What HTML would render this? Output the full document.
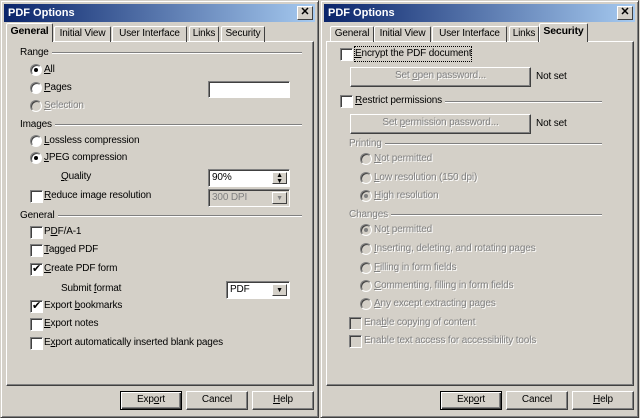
<!DOCTYPE html>
<html><head><meta charset="utf-8"><style>
*{box-sizing:border-box}
body{margin:0;width:640px;height:418px;background:#d4d0c8;font:10px "Liberation Sans",sans-serif;letter-spacing:-0.15px;color:#000;position:relative;overflow:hidden}
.dlg{position:absolute;top:0;width:319px;height:418px;background:#d4d0c8;border:1px solid;border-color:#d4d0c8 #404040 #404040 #d4d0c8;box-shadow:inset 1px 1px #fff,inset -1px -1px #808080}
.tb{position:absolute;left:3px;top:3px;right:3px;height:18px;background:linear-gradient(90deg,#0a246a,#a6caf0);color:#fff;font-weight:bold;font-size:11px;letter-spacing:0;line-height:18px;padding-left:4px}
.x{position:absolute;right:2px;top:2px;width:16px;height:14px;background:#d4d0c8;border:1px solid;border-color:#fff #404040 #404040 #fff;color:#000;font-size:11px;line-height:11px;text-align:center;font-weight:bold}
.a{position:absolute;white-space:nowrap;line-height:14px;z-index:3}
.l{background:#d4d0c8;padding-right:3px}
.g{color:#808080;text-shadow:1px 1px #fff}
.tab{position:absolute;top:26px;height:16px;border:1px solid;border-color:#fff #404040 transparent #fff;border-bottom:none;line-height:14px;text-align:center;border-radius:2px 2px 0 0}
.tab.on{top:23px;height:19px;font-weight:bold;background:#d4d0c8;z-index:2;font-size:10.5px}
.panel{position:absolute;top:41px;height:345px;border:1px solid;border-color:#fff #404040 #404040 #fff;box-shadow:inset -1px -1px #808080}
.line{position:absolute;height:2px;border-top:1px solid #808080;border-bottom:1px solid #fff}
.r{position:absolute;width:12px;height:12px;border-radius:50%;background:#fff;border:1px solid;border-color:#808080 #fff #fff #808080;box-shadow:inset 1px 1px #404040}
.r.d{background:#d4d0c8}
.r.on::after{content:"";position:absolute;left:3px;top:3px;width:4px;height:4px;border-radius:50%;background:#000}
.r.d.on::after{background:#808080}
.c{position:absolute;width:13px;height:13px;background:#fff;border:1px solid;border-color:#808080 #fff #fff #808080;box-shadow:inset 1px 1px #404040}
.c.d{background:#d4d0c8}
.c.on::after{content:"✔";position:absolute;left:1px;top:-2px;font-size:11px}
.box{position:absolute;background:#fff;border:1px solid;border-color:#808080 #fff #fff #808080;box-shadow:inset 1px 1px #404040;line-height:15px;padding-left:3px}
.btn{position:absolute;height:19px;border:1px solid;border-color:#fff #404040 #404040 #fff;box-shadow:inset -1px -1px #808080;text-align:center;line-height:16px}
.dd{position:absolute;right:2px;top:2px;width:15px;bottom:2px;background:#d4d0c8;border:1px solid;border-color:#fff #404040 #404040 #fff;font-size:7px;text-align:center;line-height:11px}
u{text-decoration:underline}
</style></head><body>

<div class="dlg" style="left:0">
<div class="tb">PDF Options<div class="x">✕</div></div>
</div>
<div class="panel" style="left:6px;width:308px"></div>
<div class="tab on" style="left:6px;width:47px;border-bottom:none">General</div>
<div class="tab" style="left:54px;width:57px">Initial View</div>
<div class="tab" style="left:112px;width:75px">User Interface</div>
<div class="tab" style="left:189px;width:30px">Links</div>
<div class="tab" style="left:221px;width:44px">Security</div>

<div class="a l" style="left:20px;top:46px">Range</div><div class="line" style="left:20px;width:282px;top:52px"></div>
<div class="r on" style="left:30px;top:64px"></div><div class="a" style="left:44px;top:63px"><u>A</u>ll</div>
<div class="r" style="left:30px;top:82px"></div><div class="a" style="left:44px;top:81px"><u>P</u>ages</div>
<div class="box" style="left:208px;top:81px;width:82px;height:17px"></div>
<div class="r d" style="left:30px;top:100px"></div><div class="a g" style="left:44px;top:99px"><u>S</u>election</div>
<div class="a l" style="left:20px;top:118px">Images</div><div class="line" style="left:20px;width:282px;top:124px"></div>
<div class="r" style="left:30px;top:135px"></div><div class="a" style="left:44px;top:134px"><u>L</u>ossless compression</div>
<div class="r on" style="left:30px;top:152px"></div><div class="a" style="left:44px;top:151px"><u>J</u>PEG compression</div>
<div class="a" style="left:61px;top:170px"><u>Q</u>uality</div>
<div class="box" style="left:208px;top:169px;width:82px;height:18px">90%<div class="dd" style="line-height:6px">▲<br>▼</div></div>
<div class="c" style="left:30px;top:190px"></div><div class="a" style="left:44px;top:189px"><u>R</u>educe image resolution</div>
<div class="box" style="left:208px;top:189px;width:82px;height:18px;background:#d4d0c8;color:#808080">300 DPI<div class="dd" style="color:#808080">▼</div></div>
<div class="a l" style="left:20px;top:209px">General</div><div class="line" style="left:20px;width:282px;top:215px"></div>
<div class="c" style="left:30px;top:226px"></div><div class="a" style="left:44px;top:225px">P<u>D</u>F/A-1</div>
<div class="c" style="left:30px;top:244px"></div><div class="a" style="left:44px;top:243px"><u>T</u>agged PDF</div>
<div class="c on" style="left:30px;top:263px"></div><div class="a" style="left:44px;top:262px"><u>C</u>reate PDF form</div>
<div class="a" style="left:61px;top:282px">Submit <u>f</u>ormat</div>
<div class="box" style="left:226px;top:281px;width:64px;height:18px">PDF<div class="dd">▼</div></div>
<div class="c on" style="left:30px;top:300px"></div><div class="a" style="left:44px;top:299px">Export <u>b</u>ookmarks</div>
<div class="c" style="left:30px;top:318px"></div><div class="a" style="left:44px;top:317px"><u>E</u>xport notes</div>
<div class="c" style="left:30px;top:337px"></div><div class="a" style="left:44px;top:336px">E<u>x</u>port automatically inserted blank pages</div>

<div class="btn" style="left:120px;top:391px;width:62px;border-color:#000;box-shadow:inset 1px 1px #fff,inset -1px -1px #404040,inset -2px -2px #808080">Exp<u>o</u>rt</div>
<div class="btn" style="left:186px;top:391px;width:62px">Cancel</div>
<div class="btn" style="left:252px;top:391px;width:62px"><u>H</u>elp</div>

<div class="dlg" style="left:320px">
<div class="tb">PDF Options<div class="x">✕</div></div>
</div>
<div class="panel" style="left:326px;width:308px"></div>
<div class="tab" style="left:330px;width:44px">General</div>
<div class="tab" style="left:374px;width:57px">Initial View</div>
<div class="tab" style="left:432px;width:75px">User Interface</div>
<div class="tab" style="left:509px;width:30px">Links</div>
<div class="tab on" style="left:539px;width:49px">Security</div>

<div class="c" style="left:340px;top:48px"></div><div class="a" style="left:355px;top:47px;outline:1px dotted #000"><u>E</u>ncrypt the PDF document</div>
<div class="btn g" style="left:350px;top:67px;width:181px;height:20px">Set <u>o</u>pen password...</div>
<div class="a" style="left:536px;top:70px">Not set</div>
<div class="c" style="left:340px;top:95px"></div><div class="a l" style="left:355px;top:94px"><u>R</u>estrict permissions</div>
<div class="line" style="left:400px;width:202px;top:101px"></div>
<div class="btn g" style="left:350px;top:114px;width:181px;height:20px">Set <u>p</u>ermission password...</div>
<div class="a" style="left:536px;top:117px">Not set</div>
<div class="a g l" style="left:349px;top:137px">Printing</div><div class="line" style="left:360px;width:242px;top:143px"></div>
<div class="r d" style="left:360px;top:153px"></div><div class="a g" style="left:374px;top:152px"><u>N</u>ot permitted</div>
<div class="r d" style="left:360px;top:172px"></div><div class="a g" style="left:374px;top:171px"><u>L</u>ow resolution (150 dpi)</div>
<div class="r d on" style="left:360px;top:190px"></div><div class="a g" style="left:374px;top:189px"><u>H</u>igh resolution</div>
<div class="a g l" style="left:349px;top:208px">Changes</div><div class="line" style="left:360px;width:242px;top:214px"></div>
<div class="r d on" style="left:360px;top:224px"></div><div class="a g" style="left:374px;top:223px">No<u>t</u> permitted</div>
<div class="r d" style="left:360px;top:243px"></div><div class="a g" style="left:374px;top:242px"><u>I</u>nserting, deleting, and rotating pages</div>
<div class="r d" style="left:360px;top:262px"></div><div class="a g" style="left:374px;top:261px"><u>F</u>illing in form fields</div>
<div class="r d" style="left:360px;top:280px"></div><div class="a g" style="left:374px;top:279px"><u>C</u>ommenting, filling in form fields</div>
<div class="r d" style="left:360px;top:298px"></div><div class="a g" style="left:374px;top:297px"><u>A</u>ny except extracting pages</div>
<div class="c d" style="left:349px;top:317px"></div><div class="a g" style="left:364px;top:316px">Ena<u>b</u>le copying of content</div>
<div class="c d" style="left:349px;top:335px"></div><div class="a g" style="left:364px;top:334px">Enable text access for accessibility tools</div>

<div class="btn" style="left:440px;top:391px;width:62px;border-color:#000;box-shadow:inset 1px 1px #fff,inset -1px -1px #404040,inset -2px -2px #808080">Exp<u>o</u>rt</div>
<div class="btn" style="left:506px;top:391px;width:62px">Cancel</div>
<div class="btn" style="left:572px;top:391px;width:62px"><u>H</u>elp</div>
</body></html>
